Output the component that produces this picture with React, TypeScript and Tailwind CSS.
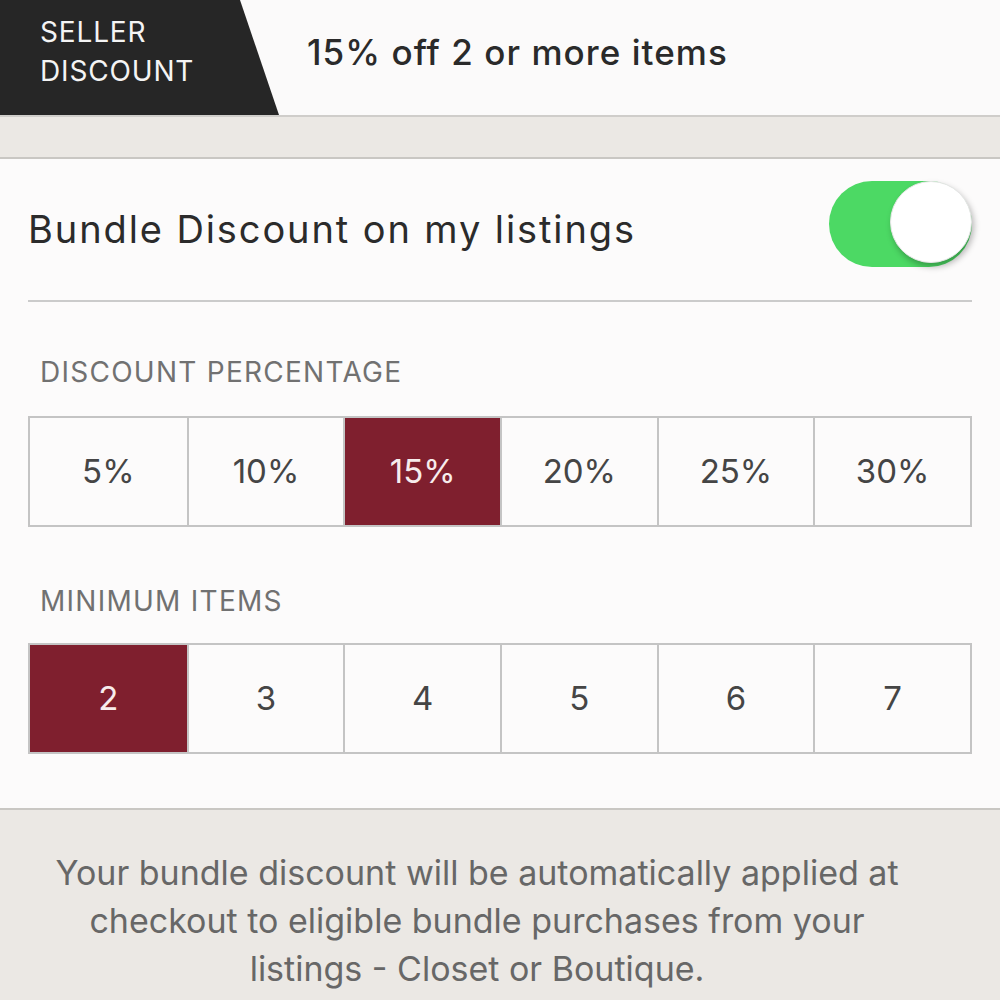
import { useState } from "react";

const percentages = ["5%", "10%", "15%", "20%", "25%", "30%"];
const minimums = ["2", "3", "4", "5", "6", "7"];

interface SegmentsProps {
  options: string[];
  value: string;
  onChange: (v: string) => void;
}

const Segments = ({ options, value, onChange }: SegmentsProps) => {
  return (
    <div className="grid grid-cols-6 h-[111px] border-2 border-[#c4c4c4]">
      {options.map((opt, i) => (
        <button
          key={opt}
          onClick={() => onChange(opt)}
          className={`flex items-center justify-center text-[33px] ${i > 0 ? "border-l-2 border-[#c4c4c4]" : ""} ${
            opt === value ? "bg-[#7f1f2e] text-[#f7ecec]" : "bg-[#fcfbfb] text-[#454545]"
          }`}
        >
          {opt}
        </button>
      ))}
    </div>
  );
};

const Toggle = ({ on, onToggle }: { on: boolean; onToggle: () => void }) => {
  return (
    <button
      onClick={onToggle}
      className={`relative w-[143px] h-[86px] mb-[12px] rounded-full ${on ? "bg-[#4cd964]" : "bg-[#e5e5e5]"}`}
    >
      <span
        className={`absolute top-0 w-[82px] h-[82px] rounded-full bg-white border border-[#e6e6e6] shadow-[2px_4px_6px_rgba(0,0,0,0.28)] ${
          on ? "right-0" : "left-0"
        }`}
      />
    </button>
  );
};

const App = () => {
  const [enabled, setEnabled] = useState(true);
  const [percent, setPercent] = useState("15%");
  const [minItems, setMinItems] = useState("2");

  return (
    <div className="w-[1000px] h-[1000px] overflow-hidden bg-[#ebe8e4] font-['Inter',sans-serif]">
      {/* banner */}
      <div className="flex h-[117px] bg-[#fbfafa] border-b-2 border-[#cfcdca]">
        <div className="w-[279px] shrink-0 bg-[#262626] pl-10 pt-[13px] text-[28px] leading-[39px] tracking-[0.03em] text-[#f4f4f4] [clip-path:polygon(0_0,240px_0,279px_100%,0_100%)]">
          SELLER
          <br />
          DISCOUNT
        </div>
        <div className="pl-7 pt-[35px] text-[35px] leading-none font-medium tracking-[0.03em] text-[#2a2a2a]">
          15% off {minItems} or more items
        </div>
      </div>

      <div className="h-[40px]" />

      {/* settings card */}
      <div className="bg-[#fcfbfb] border-y-2 border-[#c9c7c3] px-7 pb-[54px]">
        <div className="flex items-center justify-between h-[143px] border-b-2 border-[#cbcbcb]">
          <span className="text-[38px] tracking-[0.05em] text-[#2b2b2b]">Bundle Discount on my listings</span>
          <Toggle on={enabled} onToggle={() => setEnabled(!enabled)} />
        </div>

        <div className="mt-[53px] mb-[27px] pl-3 text-[28px] leading-[34px] tracking-[0.045em] text-[#717171]">
          DISCOUNT PERCENTAGE
        </div>
        <Segments options={percentages} value={percent} onChange={setPercent} />

        <div className="mt-[57px] mb-[25px] pl-3 text-[28px] leading-[34px] tracking-[0.045em] text-[#717171]">
          MINIMUM ITEMS
        </div>
        <Segments options={minimums} value={minItems} onChange={setMinItems} />
      </div>

      <p className="ml-[38px] w-[878px] pt-[39px] text-center text-[34px] leading-[48px] text-[#676767]">
        Your bundle discount will be automatically applied at checkout to eligible bundle purchases from your
        listings - Closet or Boutique.
      </p>
    </div>
  );
};

export default App;
